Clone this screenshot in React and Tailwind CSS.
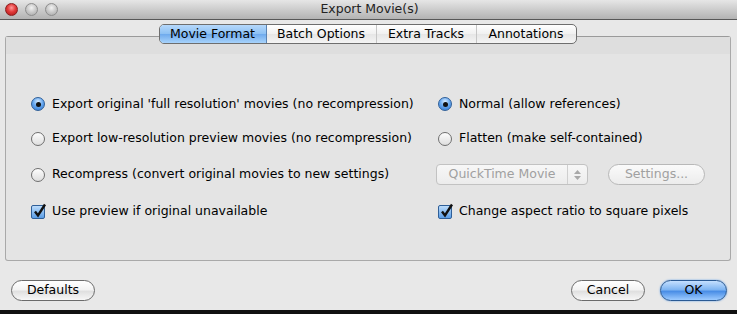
import React from "react";

const font = { fontFamily: "'DejaVu Sans', 'Liberation Sans', sans-serif" };

function Light({ red }) {
  return (
    <div
      className={
        red
          ? "w-[13px] h-[13px] rounded-full border border-[#8a1f1f] bg-[radial-gradient(circle_at_50%_35%,#ff9a9a_0%,#e23b3b_45%,#a81414_100%)]"
          : "w-[13px] h-[13px] rounded-full border border-[#8d8d8d] bg-[radial-gradient(circle_at_50%_35%,#f2f2f2_0%,#c9c9c9_50%,#a5a5a5_100%)]"
      }
    />
  );
}

function Radio({ checked }) {
  return checked ? (
    <div className="w-[14px] h-[14px] rounded-full border border-[#2f5f98] bg-[radial-gradient(circle_at_50%_30%,#d8ecff_0%,#6aaaf0_45%,#2e74cf_100%)] flex items-center justify-center shrink-0">
      <div className="w-[5px] h-[5px] rounded-full bg-[#111]" />
    </div>
  ) : (
    <div className="w-[14px] h-[14px] rounded-full border border-[#6e6e6e] bg-[linear-gradient(#fdfdfd,#dedede)] shrink-0" />
  );
}

function Check() {
  return (
    <div className="relative w-[14px] h-[14px] rounded-[2px] border border-[#2f5f98] bg-[linear-gradient(#bcdcfb,#5a9de6)] shrink-0">
      <svg className="absolute left-[1px] -top-[3px]" width="14" height="15" viewBox="0 0 14 15">
        <path d="M2 8.5 L5 12.5 L12 1.5" fill="none" stroke="#111" strokeWidth="2.4" strokeLinejoin="miter" />
      </svg>
    </div>
  );
}

function Option({ children, type = "radio", checked }) {
  return (
    <div className="flex items-center gap-[7px] text-[12.5px] text-black">
      {type === "radio" ? <Radio checked={checked} /> : <Check />}
      <span>{children}</span>
    </div>
  );
}

function PillButton({ children, className = "", primary }) {
  return (
    <div
      className={
        (primary
          ? "border-[#2a5a94] bg-[linear-gradient(#c5e0ff_0%,#7fb5f2_45%,#4a8ee6_55%,#9dcbff_100%)] shadow-[0_0_2px_#5a9be6]"
          : "border-[#6b6b6b] bg-[linear-gradient(#ffffff_0%,#f3f3f3_45%,#e0e0e0_55%,#f7f7f7_100%)]") +
        " h-[21px] rounded-full border flex items-center justify-center text-[12.5px] text-black " +
        className
      }
    >
      {children}
    </div>
  );
}

const tabs = ["Movie Format", "Batch Options", "Extra Tracks", "Annotations"];
const tabWidths = ["w-[107px]", "w-[110px]", "w-[100px]", "w-[99px]"];

export default function App() {
  return (
    <div className="w-[737px] h-[314px] flex flex-col bg-[#e8e8e8] overflow-hidden" style={font}>
      <div className="relative h-[20px] shrink-0 flex items-center bg-[linear-gradient(#e6e6e6,#b3b3b3)] border-b border-[#585858]">
        <div className="flex items-center gap-[7px] pl-[5px]">
          <Light red />
          <Light />
          <Light />
        </div>
        <div className="flex-1 text-center text-[12.5px] text-[#222] -ml-[56px]">Export Movie(s)</div>
      </div>

      <div className="flex-1 flex flex-col px-[5px] pt-[4px]">
        <div className="relative z-10 flex justify-center pr-[2px]">
          <div className="flex h-[20px] rounded-[5px] border border-[#6e6e6e] bg-[linear-gradient(#ffffff,#f0f0f0_50%,#e6e6e6_51%,#f4f4f4)] overflow-hidden text-[12.5px] text-black">
            {tabs.map((t, i) => (
              <div
                key={t}
                className={
                  tabWidths[i] +
                  " flex items-center justify-center " +
                  (i === 0
                    ? "bg-[linear-gradient(#b5d8fb,#8cc0f3_50%,#6eaaed_51%,#a8d3fb)] border-r border-[#5a83b3]"
                    : i < 3
                    ? "border-r border-[#c6c6c6]"
                    : "")
                }
              >
                {t}
              </div>
            ))}
          </div>
        </div>

        <div className="-mt-[8px] mr-[1px] h-[225px] rounded-[3px] border border-[#a9a9a9] border-t-[#9a9a9a] bg-[#e4e4e4] flex flex-col">
          <div className="h-[17px] bg-[#dedede]" />
          <div className="flex pt-[33px] pl-[25px]">
            <div className="w-[407px] flex flex-col">
              <div className="h-[34px] flex items-center">
                <Option checked>Export original 'full resolution' movies (no recompression)</Option>
              </div>
              <div className="h-[35px] flex items-center">
                <Option>Export low-resolution preview movies (no recompression)</Option>
              </div>
              <div className="h-[37px] flex items-center">
                <Option>Recompress (convert original movies to new settings)</Option>
              </div>
              <div className="h-[37px] flex items-center">
                <Option type="check">Use preview if original unavailable</Option>
              </div>
            </div>
            <div className="flex flex-col">
              <div className="h-[34px] flex items-center">
                <Option checked>Normal (allow references)</Option>
              </div>
              <div className="h-[35px] flex items-center">
                <Option>Flatten (make self-contained)</Option>
              </div>
              <div className="h-[37px] flex items-center -ml-[2px] gap-[20px]">
                <div className="w-[152px] h-[21px] rounded-[4px] border border-[#c2c2c2] bg-[linear-gradient(#f7f7f7,#ececec)] flex items-center text-[12.5px] text-[#a0a0a0]">
                  <span className="flex-1 text-center">QuickTime Movie</span>
                  <div className="w-[20px] h-full border-l border-[#cfcfcf] flex flex-col items-center justify-center gap-[2px]">
                    <svg width="7" height="4" viewBox="0 0 7 4"><path d="M0 4 L3.5 0 L7 4Z" fill="#a8a8a8" /></svg>
                    <svg width="7" height="4" viewBox="0 0 7 4"><path d="M0 0 L3.5 4 L7 0Z" fill="#a8a8a8" /></svg>
                  </div>
                </div>
                <div className="w-[97px] h-[21px] rounded-full border border-[#b8b8b8] bg-[linear-gradient(#fafafa,#ececec)] flex items-center justify-center text-[12.5px] text-[#a0a0a0]">
                  Settings...
                </div>
              </div>
              <div className="h-[37px] flex items-center">
                <Option type="check">Change aspect ratio to square pixels</Option>
              </div>
            </div>
          </div>
        </div>

        <div className="flex items-center pt-[19px] pl-[6px]">
          <PillButton className="w-[84px]">Defaults</PillButton>
          <div className="flex-1" />
          <PillButton className="w-[74px]">Cancel</PillButton>
          <PillButton primary className="w-[67px] ml-[15px] mr-[5px]">OK</PillButton>
        </div>
      </div>
      <div className="h-[4px] bg-[#111] shrink-0" />
    </div>
  );
}
